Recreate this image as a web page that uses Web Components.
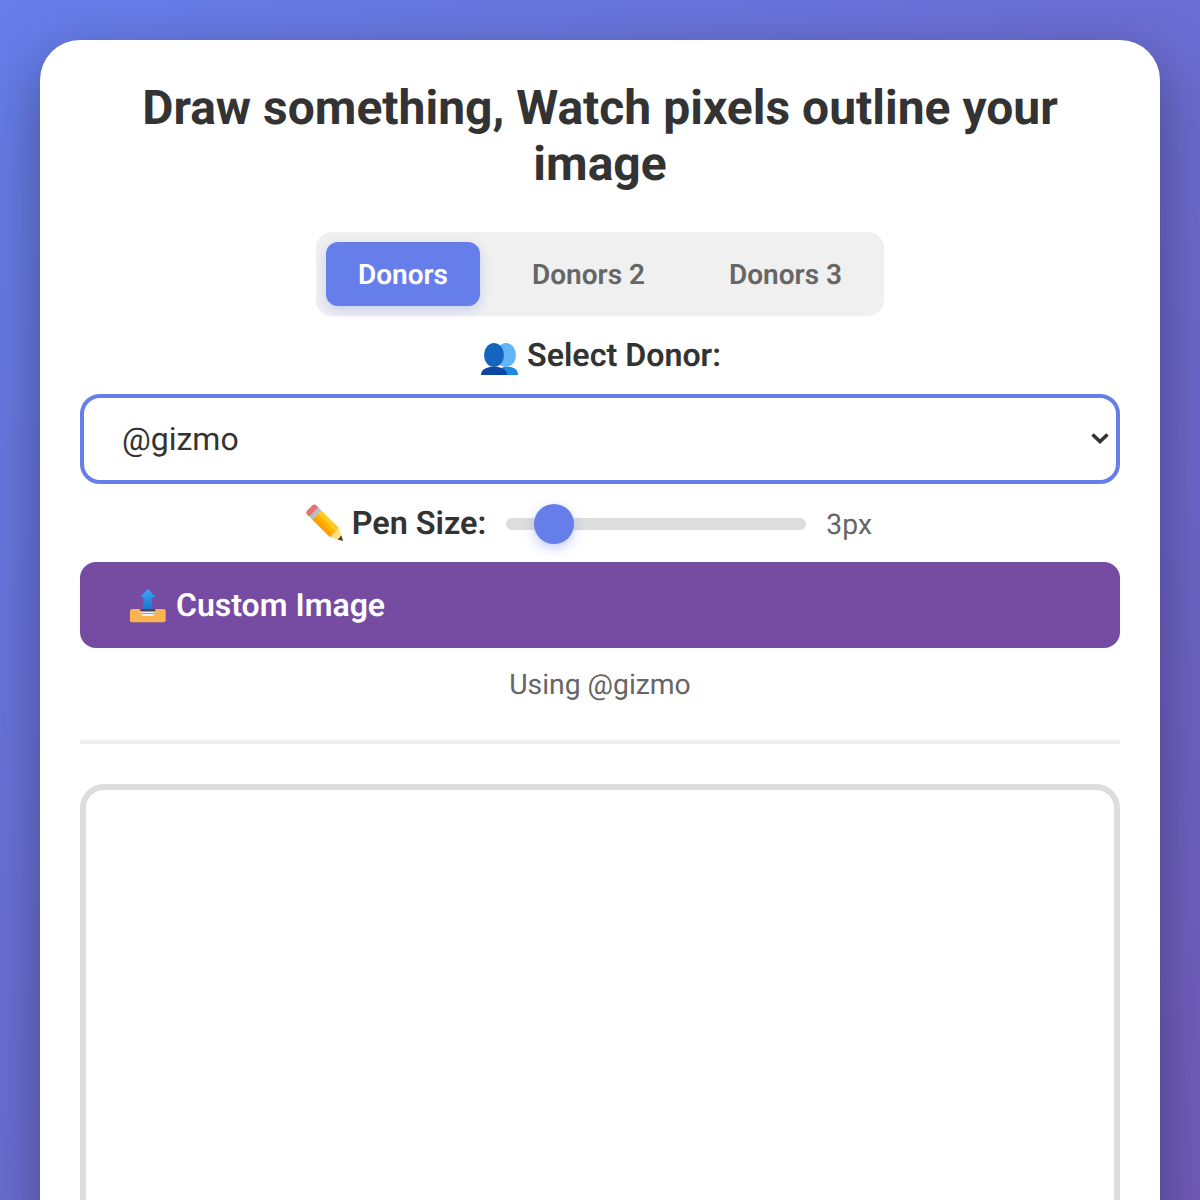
<!DOCTYPE html>
<html lang="en">
<head>
<meta charset="utf-8">
<title>Draw something</title>
<style>
  html, body { margin: 0; padding: 0; }
  body {
    font-family: Roboto, "Noto Sans", sans-serif;
    text-rendering: geometricPrecision;
    background: linear-gradient(135deg, #667eea 0%, #764ba2 100%);
    color: #333;
  }
  ::-webkit-scrollbar { display: none; }
</style>
</head>
<body>
<draw-app>
  <app-title>Draw something, Watch pixels outline your image</app-title>
  <tab-bar>
    <tab-button active>Donors</tab-button>
    <tab-button>Donors 2</tab-button>
    <tab-button>Donors 3</tab-button>
  </tab-bar>
  <donor-select value="@gizmo"><emoji-icon name="people"></emoji-icon>Select Donor:</donor-select>
  <pen-size value="3" min="1" max="20"><emoji-icon name="pencil"></emoji-icon>Pen Size:</pen-size>
  <upload-button><emoji-icon name="outbox"></emoji-icon>Custom Image</upload-button>
  <status-line>Using @gizmo</status-line>
  <draw-canvas></draw-canvas>
</draw-app>

<script>
// Emoji drawn as svg so they look the same as the reference
const EMOJI = {
  people: `
    <ellipse cx="25" cy="19" rx="10" ry="12" fill="#64b5f6"/>
    <path d="M15 39C15 34 19 32 23 31H30C34 32 37 34 37 39Z" fill="#1e88e5"/>
    <ellipse cx="13" cy="19" rx="10" ry="12" fill="#1565c0"/>
    <path d="M0 39C0 34 4 32 9 31H17C22 32 26 34 26 39Z" fill="#0d47a1"/>
  `,
  pencil: `
    <g transform="translate(3.7 4) rotate(44.7)">
      <path d="M6 -6.5H3A3 3 0 0 0 0 -3.5V3.5A3 3 0 0 0 3 6.5H6Z" fill="#e57373"/>
      <rect x="6" y="-6.5" width="4" height="13" fill="#b0bec5"/>
      <rect x="10" y="-6.5" width="25" height="4.4" fill="#ffca28"/>
      <rect x="10" y="-2.1" width="25" height="4.4" fill="#ffb300"/>
      <rect x="10" y="2.2" width="25" height="4.3" fill="#ffa000"/>
      <path d="M35 -6.5L47 0L35 6.5Z" fill="#ffe082"/>
      <path d="M42 -2.7L47 0L42 2.7Z" fill="#37474f"/>
    </g>
  `,
  outbox: `
    <defs>
      <linearGradient id="arrow" x1="0" y1="0" x2="0" y2="1">
        <stop offset="0" stop-color="#42a5f5"/>
        <stop offset="1" stop-color="#1976d2"/>
      </linearGradient>
    </defs>
    <path d="M1 25A2 2 0 0 1 3 23H34.7A2 2 0 0 1 36.7 25V34.3A2 2 0 0 1 34.7 36.3H3A2 2 0 0 1 1 34.3Z" fill="#fbb44f"/>
    <path d="M11 23H26.7L25.5 28Q25 30 23 30H14.7Q12.7 30 12.2 28Z" fill="#eceff1"/>
    <path d="M11 23H26.7L26 25.5H11.7Z" fill="#4e4550"/>
    <rect x="12.2" y="27" width="13.3" height="1" fill="#90a4ae"/>
    <path d="M18.8 3L26.7 11H22.7V23H14.3V11H11Z" fill="url(#arrow)"/>
  `
};

class EmojiIcon extends HTMLElement {
  constructor() {
    super();
    this.attachShadow({ mode: 'open' });
  }

  connectedCallback() {
    const name = this.getAttribute('name');
    this.shadowRoot.innerHTML = `
      <style>
        :host { display: block; flex: none; width: 38px; height: 38px; }
        svg { display: block; overflow: visible; }
      </style>
      <svg width="38" height="38" viewBox="0 0 38 38" role="img" aria-label="${name}">${EMOJI[name]}</svg>
    `;
  }
}

// Outer page wrapper and white card
class DrawApp extends HTMLElement {
  constructor() {
    super();
    this.attachShadow({ mode: 'open' });
    this.shadowRoot.innerHTML = `
      <style>
        :host { display: block; padding: 40px; }
        .card {
          display: flex;
          flex-direction: column;
          background: #fff;
          border-radius: 40px;
          padding: 40px 40px 500px;
          box-shadow: 0 20px 60px rgba(0, 0, 0, 0.35);
        }
      </style>
      <div class="card"><slot></slot></div>
    `;
  }
}

class AppTitle extends HTMLElement {
  constructor() {
    super();
    this.attachShadow({ mode: 'open' });
    this.shadowRoot.innerHTML = `
      <style>
        :host { display: block; margin-bottom: 40px; }
        h1 {
          margin: 0;
          font-size: 48px;
          line-height: 56px;
          font-weight: 700;
          text-align: center;
          color: #333;
        }
      </style>
      <h1><slot></slot></h1>
    `;
  }
}

class TabBar extends HTMLElement {
  constructor() {
    super();
    this.attachShadow({ mode: 'open' });
    this.shadowRoot.innerHTML = `
      <style>
        :host { display: flex; justify-content: center; margin-bottom: 20px; }
        .tabs {
          display: flex;
          gap: 20px;
          padding: 10px;
          background: #f0f0f0;
          border-radius: 16px;
        }
      </style>
      <div class="tabs"><slot></slot></div>
    `;
  }
}

class TabButton extends HTMLElement {
  constructor() {
    super();
    this.attachShadow({ mode: 'open' });
    this.shadowRoot.innerHTML = `
      <style>
        :host {
          display: block;
          padding: 17px 32px 15px;
          border-radius: 12px;
          font-size: 28px;
          line-height: 32px;
          font-weight: 600;
          color: #666;
        }
        :host([active]) {
          background: #667eea;
          color: #fff;
          box-shadow: 0 4px 12px rgba(102, 126, 234, 0.3);
        }
      </style>
      <slot></slot>
    `;
  }
}

class DonorSelect extends HTMLElement {
  constructor() {
    super();
    this.attachShadow({ mode: 'open' });
    this.shadowRoot.innerHTML = `
      <style>
        :host { display: flex; flex-direction: column; align-items: center; gap: 20px; margin-bottom: 20px; }
        label { display: flex; gap: 8px; margin-left: 2px; font-size: 32.2px; line-height: 38px; font-weight: 600; color: #333; }
        .box { position: relative; width: 100%; height: 90px; }
        select {
          -webkit-appearance: none;
          appearance: none;
          display: block;
          width: 100%;
          height: 100%;
          box-sizing: border-box;
          padding: 0 38px;
          font: 400 32px Roboto, sans-serif;
          text-rendering: geometricPrecision;
          color: #333;
          background: #fff;
          border: 4px solid #667eea;
          border-radius: 20px;
          outline: none;
        }
        svg { position: absolute; top: 38px; right: 10px; pointer-events: none; }
      </style>
      <label><slot></slot></label>
      <div class="box">
        <select><option></option></select>
        <svg width="20" height="14" viewBox="0 0 20 14" fill="none" stroke="#333" stroke-width="3.6">
          <path d="M2.5 2.5L10 9.5L17.5 2.5"/>
        </svg>
      </div>
    `;
  }

  connectedCallback() {
    this.shadowRoot.querySelector('option').textContent = this.getAttribute('value');
  }
}

class PenSize extends HTMLElement {
  constructor() {
    super();
    this.attachShadow({ mode: 'open' });
    this.shadowRoot.innerHTML = `
      <style>
        :host { display: flex; justify-content: center; align-items: center; gap: 20px; min-height: 40px; margin-bottom: 18px; }
        label { display: flex; gap: 8px; margin-bottom: 2px; font-size: 32.4px; line-height: 38px; font-weight: 600; color: #333; }
        output { min-width: 68px; font-size: 28.3px; color: #666; }
        input {
          -webkit-appearance: none;
          appearance: none;
          width: 300px;
          height: 12px;
          margin: 0;
          background: #ddd;
          border-radius: 6px;
          outline: none;
        }
        input::-webkit-slider-thumb {
          -webkit-appearance: none;
          width: 40px;
          height: 40px;
          border-radius: 50%;
          background: #667eea;
          box-shadow: 0 4px 12px rgba(102, 126, 234, 0.4);
        }
      </style>
      <label><slot></slot></label>
      <input type="range">
      <output></output>
    `;
  }

  connectedCallback() {
    const input = this.shadowRoot.querySelector('input');
    input.min = this.getAttribute('min');
    input.max = this.getAttribute('max');
    input.value = this.getAttribute('value');
    this.shadowRoot.querySelector('output').textContent = input.value + 'px';
  }
}

class UploadButton extends HTMLElement {
  constructor() {
    super();
    this.attachShadow({ mode: 'open' });
    this.shadowRoot.innerHTML = `
      <style>
        :host {
          display: flex;
          gap: 9px;
          padding: 24px 49px;
          background: #764ba2;
          border-radius: 16px;
          font-size: 32px;
          line-height: 38px;
          font-weight: 600;
          color: #fff;
        }
      </style>
      <slot></slot>
    `;
  }
}

class StatusLine extends HTMLElement {
  constructor() {
    super();
    this.attachShadow({ mode: 'open' });
    this.shadowRoot.innerHTML = `
      <style>
        :host {
          display: block;
          margin-top: 20px;
          padding-bottom: 38px;
          border-bottom: 4px solid #f0f0f0;
          margin-bottom: 40px;
          text-align: center;
          font-size: 28.3px;
          line-height: 34px;
          color: #666;
        }
      </style>
      <slot></slot>
    `;
  }
}

class DrawCanvas extends HTMLElement {
  constructor() {
    super();
    this.attachShadow({ mode: 'open' });
    this.shadowRoot.innerHTML = `
      <style>
        :host {
          display: block;
          height: 1040px;
          box-sizing: border-box;
          background: #fff;
          border: 6px solid #ddd;
          border-radius: 24px;
        }
      </style>
    `;
  }
}

customElements.define('emoji-icon', EmojiIcon);
customElements.define('draw-app', DrawApp);
customElements.define('app-title', AppTitle);
customElements.define('tab-bar', TabBar);
customElements.define('tab-button', TabButton);
customElements.define('donor-select', DonorSelect);
customElements.define('pen-size', PenSize);
customElements.define('upload-button', UploadButton);
customElements.define('status-line', StatusLine);
customElements.define('draw-canvas', DrawCanvas);
</script>
</body>
</html>
